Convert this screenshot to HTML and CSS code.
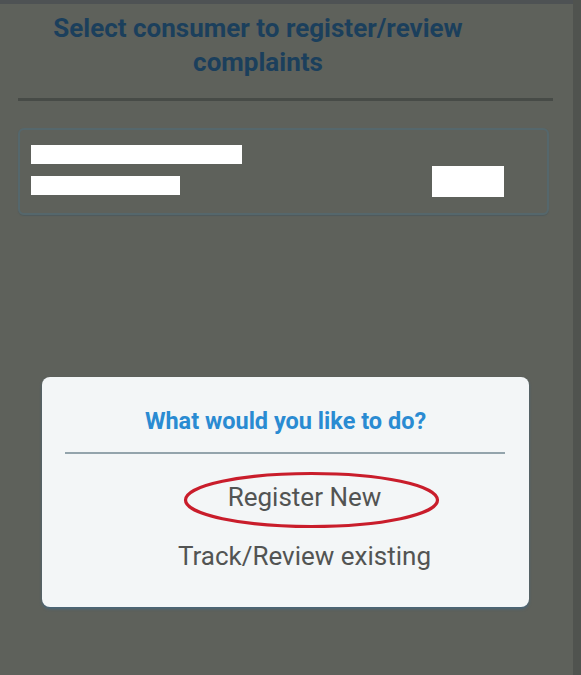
FILE: index.html
```html
<!DOCTYPE html>
<html lang="en">
<head>
<meta charset="utf-8">
<title>Select consumer</title>
<link rel="stylesheet" href="styles.css">
</head>
<body>
<div class="screen">
  <h1 class="page-title">Select consumer to register/review complaints</h1>
  <div class="rule"></div>
  <div class="consumer-card">
    <div class="consumer-info">
      <div class="redact redact-name"></div>
      <div class="redact redact-id"></div>
    </div>
    <div class="redact redact-tag"></div>
  </div>
</div>

<div class="dialog">
  <div class="dialog-title">What would you like to do?</div>
  <div class="dialog-rule"></div>
  <ul class="dialog-options">
    <li class="option">Register New</li>
    <li class="option">Track/Review existing</li>
  </ul>
  <svg class="annotation" width="257" height="58" viewBox="0 0 257 58" aria-hidden="true">
    <ellipse cx="128.5" cy="29" rx="126" ry="26.5" fill="none" stroke="#c91d2b" stroke-width="3.2"/>
  </svg>
</div>
</body>
</html>
```

FILE: styles.css
```css
html, body {
  margin: 0;
  padding: 0;
}

body {
  width: 581px;
  height: 675px;
  overflow: hidden;
  background: #50534f;
  font-family: Roboto, "Liberation Sans", sans-serif;
  position: relative;
}

.screen {
  width: 573px;
  height: 675px;
  box-sizing: border-box;
  background: #5e615b;
  border-top: 4px solid #4e5254;
  padding-top: 7px;
}

.page-title {
  margin: 0 0 0 28px;
  width: 460px;
  font-size: 26px;
  line-height: 34px;
  font-weight: 700;
  color: #1b3f5c;
  text-align: center;
}

.rule {
  margin: 19px 0 0 18px;
  width: 535px;
  height: 3px;
  background: #474b47;
}

.consumer-card {
  margin: 27px 0 0 18px;
  width: 531px;
  box-sizing: border-box;
  border: 2px solid #55676c;
  border-radius: 6px;
  padding: 15px 43px 16px 11px;
  display: flex;
  justify-content: space-between;
  align-items: flex-start;
  box-shadow: 0 1px 1px #4f5a5c;
}

.consumer-info {
  display: flex;
  flex-direction: column;
  gap: 12px;
}

.redact {
  background: #ffffff;
}

.redact-name {
  width: 211px;
  height: 19px;
}

.redact-id {
  width: 149px;
  height: 19px;
}

.redact-tag {
  width: 72px;
  height: 31px;
  margin-top: 21px;
}

.dialog {
  position: absolute;
  left: 42px;
  top: 377px;
  width: 487px;
  height: 230px;
  box-sizing: border-box;
  background: #f3f6f7;
  border-radius: 8px;
  padding-top: 30px;
  box-shadow: 0 2px 3px #47667a;
}

.dialog-title {
  font-size: 23.5px;
  line-height: 28px;
  font-weight: 700;
  color: #2a8bd2;
  text-align: center;
}

.dialog-rule {
  margin: 17px 24px 0 23px;
  height: 2px;
  background: #93a4ac;
}

.dialog-options {
  list-style: none;
  margin: 14px 0 0 0;
  padding: 0 0 0 38px;
}

.option {
  font-size: 26px;
  line-height: 59px;
  color: #525453;
  text-align: center;
}

.annotation {
  position: absolute;
  left: 141px;
  top: 94px;
}
```
